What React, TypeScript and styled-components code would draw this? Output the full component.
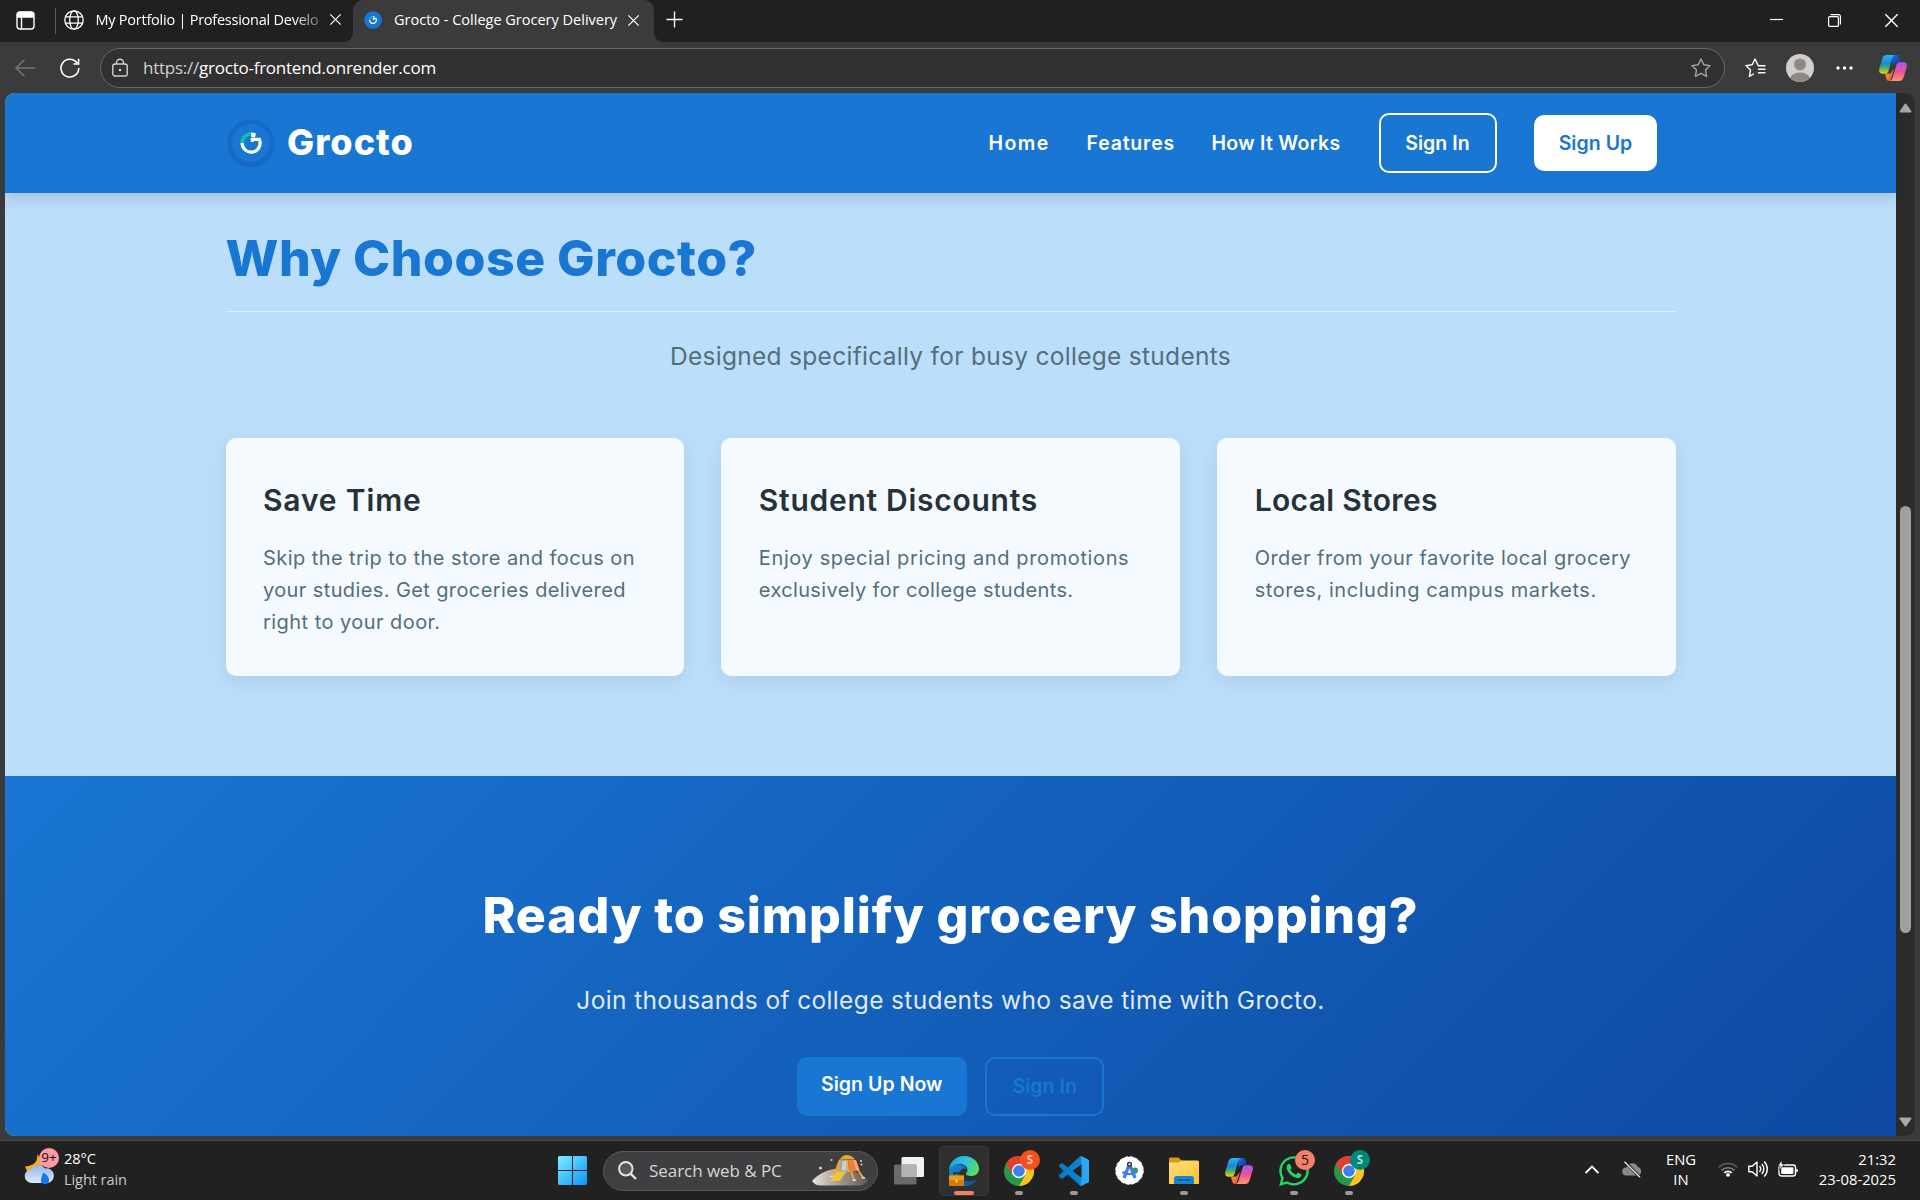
import React from "react";
import styled, { createGlobalStyle, css } from "styled-components";
import { FaWhatsapp } from "react-icons/fa";

const GlobalStyle = createGlobalStyle`
  * { box-sizing: border-box; }
  html, body { margin: 0; padding: 0; background: #3b3b3b; overflow: hidden; }
  h1, h2, h3, p { margin: 0; font-weight: inherit; }
  svg { display: block; flex: none; overflow: visible; }
`;

const ui = `"Open Sans", "Noto Sans", sans-serif`;
const brand = `Inter, "Open Sans", sans-serif`;

const Desktop = styled.div`
  width: 1920px;
  height: 1200px;
  display: flex;
  flex-direction: column;
  background: #3b3b3b;
  font-family: ${ui};
  color: #fff;
  white-space: nowrap;
`;

/* ---------- browser chrome ---------- */

const TabStrip = styled.div`
  height: 42px;
  flex: none;
  display: flex;
  align-items: center;
  background: #202020;
  padding: 0 0 1px 15.5px;
`;

const Divider = styled.div`
  width: 1px;
  height: 26px;
  margin-left: 20.5px;
  background: #5c5c5c;
`;

const Tab = styled.div<{ $active?: boolean }>`
  position: relative;
  height: 42px;
  display: flex;
  align-items: center;
  padding-bottom: 2px;
  font-size: 14.5px;
  ${(p) =>
    p.$active
      ? css`
          align-self: flex-end;
          margin-bottom: -1px;
          width: 301px;
          padding-left: 11px;
          border-radius: 10px 10px 0 0;
          background: #3b3b3b;
          &::before,
          &::after {
            content: "";
            position: absolute;
            bottom: 0;
            width: 9px;
            height: 9px;
          }
          &::before {
            left: -9px;
            background: radial-gradient(circle at 0 0, transparent 8.5px, #3b3b3b 9px);
          }
          &::after {
            right: -9px;
            background: radial-gradient(circle at 100% 0, transparent 8.5px, #3b3b3b 9px);
          }
        `
      : css`
          width: 297px;
          padding-left: 7.5px;
        `}
`;

const TabTitle = styled.span<{ $fade?: boolean }>`
  width: ${(p) => (p.$fade ? 224 : 225)}px;
  margin: 0 ${(p) => (p.$fade ? 10 : 9)}px 1px 12px;
  overflow: hidden;
  letter-spacing: ${(p) => (p.$fade ? -0.24 : 0)}px;
  ${(p) => p.$fade && "mask-image: linear-gradient(90deg, #000 88%, rgba(0,0,0,.3));"}
`;

const NewTab = styled.div`
  margin-left: 12px;
  padding-bottom: 2px;
`;

const WindowControls = styled.div`
  margin-left: auto;
  display: flex;
  align-items: center;
  gap: 44.5px;
  padding-right: 22px;
`;

const Toolbar = styled.div`
  height: 51px;
  flex: none;
  display: flex;
  align-items: center;
  padding: 1px 13px 0 15px;
`;

const ReloadSlot = styled.div`
  margin: 0 20px 0 25px;
`;

const AddressBar = styled.div`
  width: 1625px;
  height: 40px;
  display: flex;
  align-items: center;
  border: 1.5px solid #696969;
  border-radius: 20px;
  background: #313131;
  padding: 0 13px 0 11px;
`;

const Url = styled.div`
  flex: 1;
  margin-left: 15px;
  padding-bottom: 2px;
  font-size: 17px;
  letter-spacing: -0.24px;
`;

const Scheme = styled.span`
  color: #d2d2d2;
`;

const ToolIcons = styled.div`
  display: flex;
  align-items: center;
  margin-left: 20px;
  flex: 1;
`;

const ToolSlot = styled.div<{ $after: number }>`
  margin-right: ${(p) => p.$after}px;
`;

/* ---------- page ---------- */

const Viewport = styled.div`
  height: 1043px;
  flex: none;
  margin: 0 5px;
  display: flex;
  border-radius: 10px;
  overflow: hidden;
`;

const Page = styled.main`
  width: 1891px;
  display: flex;
  flex-direction: column;
  font-family: ${brand};
  background: #bbdefb;
`;

const ScrollTrack = styled.div`
  flex: 1;
  display: flex;
  flex-direction: column;
  align-items: center;
  background: #2b2b2b;
  padding: 10px 1px 9px 0;
`;

const ScrollThumb = styled.div`
  width: 11px;
  height: 427px;
  margin: 393px 0 auto;
  border-radius: 6px;
  background: #9f9f9f;
`;

const SiteHeader = styled.header`
  height: 100px;
  flex: none;
  z-index: 1;
  display: flex;
  align-items: center;
  padding: 0 239px 0 222px;
  background: #1976d2;
  box-shadow: 0 4px 15px rgba(0, 0, 0, 0.16);
`;

const BrandName = styled.div`
  margin-left: 12px;
  padding-bottom: 2px;
  font-size: 36px;
  font-weight: 800;
  letter-spacing: 1.05px;
`;

const Nav = styled.nav`
  margin-left: auto;
  display: flex;
  align-items: center;
  gap: 37.5px;
  font-size: 19.5px;
  font-weight: 600;
`;

const NavLink = styled.a<{ $w: number; $track: number }>`
  width: ${(p) => p.$w}px;
  letter-spacing: ${(p) => p.$track}px;
`;

const Button = styled.a<{ $kind: "ghost" | "light" | "primary" | "outline" }>`
  display: flex;
  align-items: center;
  justify-content: center;
  border-radius: 10px;
  font-size: 19.5px;
  font-weight: 600;
  letter-spacing: 0.05px;
  ${(p) =>
    ({
      ghost: "width: 118px; height: 60px; border: 2px solid #fff; color: #fff; padding-bottom: 1px;",
      light: "width: 123px; height: 56px; background: #fff; color: #1976d2; padding-bottom: 1px;",
      primary: "width: 170px; height: 59px; background: #1976d2; color: #fff; padding-bottom: 6px;",
      outline: "width: 119px; height: 59px; border: 2px solid #1976d2; color: #1976d2; padding-bottom: 2px;",
    })[p.$kind]}
`;

const Features = styled.section`
  height: 583px;
  flex: none;
  padding: 35px 220.5px 0;
`;

const SectionTitle = styled.h2`
  padding-bottom: 22.5px;
  border-bottom: 1px solid #e3f0fb;
  line-height: 60px;
  font-size: 50px;
  font-weight: 800;
  letter-spacing: 0.5px;
  color: #1976d2;
`;

const SectionLead = styled.p`
  margin: 25.5px 0 63px;
  line-height: 38px;
  font-size: 24.5px;
  letter-spacing: 0.29px;
  text-align: center;
  color: #546e7a;
`;

const CardGrid = styled.div`
  display: grid;
  grid-template-columns: repeat(3, 1fr);
  gap: 37.5px;
`;

const Card = styled.article`
  height: 238px;
  padding: 37.5px;
  border-radius: 10px;
  background: #f5faff;
  box-shadow: 0 5px 19px rgba(0, 0, 0, 0.08);
`;

const CardTitle = styled.h3<{ $track: number }>`
  line-height: 48px;
  font-size: 30px;
  font-weight: 600;
  letter-spacing: ${(p) => p.$track}px;
  color: #263238;
`;

const CardText = styled.p`
  margin-top: 18.5px;
  line-height: 32px;
  font-size: 20px;
  color: #546e7a;
`;

const CardLine = styled.span<{ $track: number }>`
  display: block;
  letter-spacing: ${(p) => p.$track}px;
`;

const CallToAction = styled.section`
  height: 440px;
  flex: none;
  display: flex;
  flex-direction: column;
  align-items: center;
  padding-top: 109px;
  background: linear-gradient(135deg, #1976d2 0%, #0d47a1 100%);
`;

const CtaTitle = styled.h2`
  line-height: 60px;
  font-size: 50px;
  font-weight: 800;
  letter-spacing: 0.83px;
`;

const CtaLead = styled.p`
  margin: 36px 0 38px;
  line-height: 38px;
  font-size: 24.5px;
  letter-spacing: 0.36px;
  color: rgba(255, 255, 255, 0.88);
`;

const CtaActions = styled.div`
  display: flex;
  gap: 18.5px;
`;

/* ---------- taskbar ---------- */

const Taskbar = styled.footer`
  height: 59px;
  margin-top: auto;
  display: grid;
  grid-template-columns: 558px auto 1fr;
  background: #212121;
  box-shadow: 0 -1px 0 #484848;
`;

const Weather = styled.div`
  position: relative;
  display: flex;
  align-items: center;
  padding: 0 0 4px 25px;
  gap: 9px;
`;

const WeatherText = styled.div`
  font-size: 14.6px;
  line-height: 20.3px;
  letter-spacing: -0.1px;
  color: #c9c9c9;
`;

const Temperature = styled.div`
  color: #fff;
`;

const Dock = styled.div`
  display: flex;
  align-items: center;
`;

const SearchBox = styled.div`
  width: 275px;
  height: 40px;
  margin: 0 3.5px 0 16px;
  display: flex;
  align-items: center;
  padding: 0 8px 0 14px;
  border: 1px solid #58585b;
  border-radius: 20px;
  background: #3f3f42;
  overflow: hidden;
`;

const SearchLabel = styled.span`
  flex: 1;
  margin-left: 12px;
  font-size: 17px;
  letter-spacing: -0.05px;
  color: #d6d6d6;
`;

const DockCell = styled.div`
  width: 55px;
  height: 59px;
  display: flex;
  justify-content: center;
  align-items: center;
`;

const DockTile = styled.div<{ $active?: boolean }>`
  position: relative;
  width: 50px;
  height: 50px;
  display: flex;
  flex-direction: column;
  align-items: center;
  padding-top: 10px;
  gap: 5px;
  border-radius: 5px;
  ${(p) => p.$active && "background: #2f2f30; box-shadow: inset 0 0 0 1px #3a3a3b;"}
`;

const IconBox = styled.div`
  height: 30px;
  display: flex;
  align-items: center;
`;

const Indicator = styled.div<{ $active?: boolean }>`
  width: ${(p) => (p.$active ? 20 : 8)}px;
  height: 4px;
  flex: none;
  border-radius: 2px;
  background: ${(p) => (p.$active ? "#f4806a" : "#9a9a9a")};
`;

const Badge = styled.div<{ $bg: string; $fg: string; $x: number; $y: number; $size: number; $bold?: boolean }>`
  position: absolute;
  left: ${(p) => p.$x}px;
  top: ${(p) => p.$y}px;
  width: 20px;
  height: 20px;
  border-radius: 50%;
  text-align: center;
  line-height: 19.5px;
  font-size: ${(p) => p.$size}px;
  font-weight: ${(p) => (p.$bold ? 700 : 400)};
  background: ${(p) => p.$bg};
  color: ${(p) => p.$fg};
`;

const Tray = styled.div`
  display: flex;
  align-items: center;
  justify-content: flex-end;
  padding: 0 24px 3px 0;
`;

const TrayItem = styled.div<{ $after: number }>`
  margin-right: ${(p) => p.$after}px;
`;

const TrayText = styled.div<{ $w: number; $align: string; $after?: number }>`
  width: ${(p) => p.$w}px;
  margin-right: ${(p) => p.$after ?? 0}px;
  text-align: ${(p) => p.$align};
  font-size: 14.8px;
  line-height: 20.3px;
`;

/* ---------- drawings ---------- */

const TabActionsIcon = () => (
  <svg width="19" height="19" viewBox="0 0 19 19" fill="none" stroke="#fff" strokeWidth="1.4">
    <rect x="1" y="1" width="17" height="17" rx="3" />
    <path d="M1.500 4a2.500 2.500 0 0 1 2.500-2.500h11a2.500 2.500 0 0 1 2.500 2.500v2h-16z" fill="#fff" />
    <path d="M5.500 6v12" />
  </svg>
);

const GlobeIcon = () => (
  <svg width="20" height="20" viewBox="0 0 20 20" fill="none" stroke="#fff" strokeWidth="1.3">
    <circle cx="10" cy="10" r="9.2" />
    <ellipse cx="10" cy="10" rx="4.300" ry="9.200" />
    <path d="M1.500 6.800h17M1.500 13.200h17" />
  </svg>
);

const CloseIcon = ({ size = 11 }: { size?: number }) => (
  <svg width={size} height={size} viewBox="0 0 11 11" stroke="#fff" strokeWidth="1.200">
    <path d="M.3.3l10.400 10.400M10.700.3L.3 10.700" />
  </svg>
);

const GroctoMark = ({ size, ring = "#1769c6" }: { size: number; ring?: string }) => (
  <svg width={size} height={size} viewBox="0 0 48 48" fill="none">
    <circle cx="24" cy="24.700" r="23.700" fill="#0d47a1" opacity=".3" />
    <circle cx="24" cy="24" r="23.500" fill={ring} />
    <circle cx="24" cy="24" r="19" fill="#1976d2" />
    <path d="M15.100 24.500A9 9.300 0 0 1 24 15" stroke="#10bfa8" strokeWidth="3.600" />
    <path d="M15.100 24A9 9.300 0 1 0 32.400 20.300H25.300V23" stroke="#fff" strokeWidth="3.200" />
    <path d="M24 13.200l5 1.300-1.200 4.200-3.800-1.200z" fill="#fff" />
  </svg>
);

const PlusIcon = () => (
  <svg width="17" height="17" viewBox="0 0 18 18" stroke="#fff" strokeWidth="1.400">
    <path d="M9 .5v17M.5 9h17" />
  </svg>
);

const MinimizeIcon = () => (
  <svg width="13" height="13" viewBox="0 0 13 13" stroke="#fff" strokeWidth="1.200">
    <path d="M0 5.500h13" />
  </svg>
);

const RestoreIcon = () => (
  <svg width="13" height="13" viewBox="0 0 13 13" fill="none" stroke="#fff" strokeWidth="1.200">
    <rect x=".6" y="2.600" width="9.800" height="9.800" rx="1" />
    <path d="M2.600.6h7.800a2 2 0 0 1 2 2v7.800" />
  </svg>
);

const BackIcon = () => (
  <svg width="20" height="18" viewBox="0 0 20 18" fill="none" stroke="#757575" strokeWidth="1.500">
    <path d="M9.500.8L1 9l8.500 8.200M1 9h19" />
  </svg>
);

const ReloadIcon = () => (
  <svg width="20" height="20" viewBox="0 0 20 20" fill="none" stroke="#fff" strokeWidth="1.600">
    <path d="M18.800 10A8.900 8.900 0 1 1 16.800 4.500L18.500 6" />
    <path d="M18.600.8V6h-5.200" />
  </svg>
);

const LockIcon = () => (
  <svg width="16" height="18" viewBox="0 0 16 18" fill="none" stroke="#d0d0d0" strokeWidth="1.400">
    <rect x=".8" y="5" width="14.400" height="12" rx="2.200" />
    <path d="M4.500 5V3.800a3.500 3.500 0 0 1 7 0V5" />
    <circle cx="8" cy="11" r="1.300" fill="#d0d0d0" stroke="none" />
  </svg>
);

const StarIcon = () => (
  <svg width="20" height="20" viewBox="0 0 20 20" fill="none" stroke="#a5a5a5" strokeWidth="1.400" strokeLinejoin="round">
    <path d="M10 1l2.800 5.700 6.300.9-4.600 4.400 1.100 6.300L10 15.300l-5.600 3 1.100-6.300L.9 7.600l6.300-.9z" />
  </svg>
);

const FavoritesIcon = () => (
  <svg width="21" height="20" viewBox="0 0 21 20" fill="none" stroke="#fff" strokeWidth="1.400" strokeLinejoin="round" strokeLinecap="round">
    <path d="M19.500 7.800h-6.200L10 1 7.200 6.700l-6.300.9 4.600 4.400-1.100 6.300 4-2.300M13.500 11.300h6.500M13.500 14.800h6.500M13.500 7.800h6.500" />
  </svg>
);

const AvatarIcon = () => (
  <svg width="28" height="28" viewBox="0 0 28 28">
    <defs>
      <clipPath id="avatar">
        <circle cx="14" cy="14" r="14" />
      </clipPath>
    </defs>
    <g clipPath="url(#avatar)">
      <rect width="28" height="28" fill="#d2cfcb" />
      <circle cx="14" cy="10.500" r="6" fill="#8d8986" />
      <ellipse cx="14" cy="25.500" rx="10" ry="7" fill="#8d8986" />
    </g>
  </svg>
);

const MoreIcon = () => (
  <svg width="17" height="4" viewBox="0 0 17 4" fill="#fff">
    <circle cx="2" cy="2" r="1.700" />
    <circle cx="8.500" cy="2" r="1.700" />
    <circle cx="15" cy="2" r="1.700" />
  </svg>
);

const CopilotIcon = ({ id }: { id: string }) => (
  <svg width="28" height="26" viewBox="0 0 28 26">
    <defs>
      <linearGradient id={`${id}a`} x1="0" y1="0" x2="0" y2="1">
        <stop offset="0" stopColor="#22b8f5" />
        <stop offset=".45" stopColor="#1b86d8" />
        <stop offset=".7" stopColor="#4bb35a" />
        <stop offset="1" stopColor="#f6d014" />
      </linearGradient>
      <linearGradient id={`${id}b`} x1="0" y1="0" x2="0" y2="1">
        <stop offset="0" stopColor="#a45af0" />
        <stop offset=".5" stopColor="#ee4f9c" />
        <stop offset="1" stopColor="#fb9a63" />
      </linearGradient>
      <linearGradient id={`${id}c`} x1="0" y1="0" x2="1" y2="1">
        <stop offset="0" stopColor="#1a70e0" />
        <stop offset="1" stopColor="#0a35a5" />
      </linearGradient>
      <linearGradient id={`${id}d`} x1="0" y1="0" x2="1" y2="1">
        <stop offset="0" stopColor="#f9a02c" />
        <stop offset="1" stopColor="#ee4a48" />
      </linearGradient>
    </defs>
    <path d="M13 0h4.500c1.800 0 2.600 1.200 3 2.600l1.400 4.600h-4.600c-2 0-2.900 1.200-3.500 3z" fill={`url(#${id}c)`} />
    <path d="M6 18.500h5.500l3.500-4.500-3 10c-.4 1.300-1.200 2-2.400 2C7.500 26 6.600 21.500 6 18.500z" fill={`url(#${id}d)`} />
    <path d="M8 0h8.200c-1.700.2-2.400 1.500-2.900 3.100l-3.700 12.700c-.5 1.700-1.500 2.900-3.400 2.900H3.500C.6 18.700-.4 16.400.3 13.800L3.300 3.500C4 1.200 5.500 0 8 0z" fill={`url(#${id}a)`} />
    <path d="M20 26h-9.700c2-.2 2.700-1.600 3.200-3.200l4-12.900c.5-1.700 1.500-2.700 3.300-2.700h4c2.600 0 3.700 2 3 4.600l-3.200 10.500C24 24.600 22.500 26 20 26z" fill={`url(#${id}b)`} />
  </svg>
);

const TriangleIcon = ({ down }: { down?: boolean }) => (
  <svg width="13" height="10" viewBox="0 0 13 10" fill="#a8a8a8">
    <path d={down ? "M1.200.5h10.600q1.200.2.600 1.300L7.400 9q-.9 1-1.800 0L.6 1.800Q0 .7 1.200.5z" : "M1.200 9.500h10.600q1.200-.2.600-1.300L7.400 1q-.9-1-1.800 0L.6 8.200Q0 9.300 1.200 9.500z"} />
  </svg>
);

const WeatherIcon = () => (
  <svg width="30" height="30" viewBox="0 0 30 30">
    <defs>
      <linearGradient id="cloud" x1="0" y1="0" x2="0" y2="1">
        <stop offset="0" stopColor="#8fb6ee" />
        <stop offset="1" stopColor="#dfe9fb" />
      </linearGradient>
    </defs>
    <path d="M12 0c1.500 7-3 12-12 12.500C1 17 5 20 10 19c6-1.500 9-8 7-13z" fill="#f7a91f" />
    <path d="M7 29a7 7 0 0 1-.5-14A8 8 0 0 1 20 14.500 7.300 7.300 0 0 1 23 29z" fill="url(#cloud)" />
    <path d="M18 18.500c4 2 6 4.500 6 7.500a4 4 0 0 1-8 .5c0-2.500 1.500-5 2-8z" fill="#1677ee" />
  </svg>
);

const WindowsIcon = () => (
  <svg width="29" height="29" viewBox="0 0 29 29">
    <defs>
      <linearGradient id="win" gradientUnits="userSpaceOnUse" x1="0" y1="0" x2="29" y2="29">
        <stop offset="0" stopColor="#7cf0ff" />
        <stop offset="1" stopColor="#0a93fa" />
      </linearGradient>
    </defs>
    <path d="M1 0h13v14H0V1zM15 0h13l1 1v13H15zM0 15h14v14H1l-1-1zM15 15h14v13l-1 1H15z" fill="url(#win)" />
  </svg>
);

const SearchIcon = () => (
  <svg width="19" height="19" viewBox="0 0 19 19" fill="none" stroke="#e4e4e4" strokeWidth="2">
    <circle cx="7.800" cy="7.800" r="6.700" fill="#58585b" />
    <path d="M12.600 12.600l5.400 5.400" strokeWidth="2.400" />
  </svg>
);

const LanderArt = () => (
  <svg width="57" height="31" viewBox="0 0 57 31">
    <defs>
      <linearGradient id="moon" x1="0" y1="0" x2="1" y2="0">
        <stop offset="0" stopColor="#e9e3da" />
        <stop offset=".45" stopColor="#a8a098" />
        <stop offset="1" stopColor="#5f5751" />
      </linearGradient>
    </defs>
    <path d="M0 26C7 18 18 13 29 13.500c11 .5 21 5 27 12.500-3 3-6 4.500-8 4.500H9C5 30.500 2 29 0 26z" fill="url(#moon)" />
    <path d="M22.500 16.500L27 4.500h4l-2 12z" fill="#efa626" />
    <path d="M28.500 5h7.500v11.500h-9z" fill="#98a5b5" />
    <path d="M30.500 6h4v9.500h-5z" fill="#c4ced8" />
    <path d="M36 5h7l4 10.500-10 1.500z" fill="#ef7f3e" />
    <path d="M41 5h3l3.500 10-3 .5z" fill="#f6a868" />
    <path d="M28 4.500c1-2.500 4-4.500 7-4.500s6 1.500 8 4.500z" fill="#e2aa2a" />
    <path d="M24.500 16.500h10L27.500 26H18z" fill="#f2c33a" />
    <path d="M23 15l-3.500 6M46 15l5 7.500M39 16.500l3 8.500M35 6l1.500 11" stroke="#f0b32e" strokeWidth="1.700" />
    <path d="M49.500 22.800h3.500M40.500 25.300h3.500M18 21.500h3" stroke="#e3ded6" strokeWidth="1.400" />
    <g fill="#f3d3a0">
      <circle cx="8.500" cy="13" r="1.500" />
      <circle cx="19.500" cy="5" r="1" />
      <circle cx="49" cy="6" r="1" />
      <circle cx="49.500" cy="9.500" r="1" />
    </g>
  </svg>
);

const TaskViewIcon = () => (
  <svg width="30" height="28" viewBox="0 0 30 28">
    <rect x="7.500" y="0" width="22.500" height="20" rx="1.500" fill="#f1f1f1" />
    <rect x="0" y="7.500" width="22.500" height="20" rx="1.500" fill="#777" opacity=".85" />
    <path d="M7.500 7.500h15V20h-15z" fill="#b3b3b3" />
  </svg>
);

const EdgeIcon = () => (
  <svg width="30" height="30" viewBox="0 0 30 30">
    <defs>
      <linearGradient id="edgeTop" x1="0" y1=".4" x2="1" y2=".7">
        <stop offset="0" stopColor="#1fa3e3" />
        <stop offset=".5" stopColor="#2ec4d8" />
        <stop offset="1" stopColor="#5fe04e" />
      </linearGradient>
      <linearGradient id="edgeLow" x1="0" y1="0" x2="1" y2="1">
        <stop offset="0" stopColor="#1a8ad8" />
        <stop offset="1" stopColor="#0d4f9c" />
      </linearGradient>
    </defs>
    <path d="M0 15C0 6 7 0 15 0c8.500 0 15 6 15 12.500 0 5-3.500 7.500-8 7.500-3 0-5-1-5-2.300 0-1 1.500-1.700 1.500-3.700 0-3.500-3.500-6-8-6-5 0-9 3-10.500 7z" fill="url(#edgeTop)" />
    <path d="M0 15c0-4 5-7 9.500-6.500 4.500 0 7.500 2.500 8 5-3-2.500-7 .5-7 5 0 4 5 7 10 7 3 0 5.500-1 7.500-2.800C25.500 28 21 30 15 30 7 30 0 24 0 15z" fill="url(#edgeLow)" />
    <rect x="0" y="19.500" width="15" height="10.500" fill="#d27a0c" />
    <path d="M0 19.500h15V24H0z" fill="#f09a1a" />
    <path d="M5 19v-2h5v2" fill="none" stroke="#3d2c14" strokeWidth="1.300" />
    <rect x="6.500" y="23.500" width="2" height="3" fill="#ffe35a" />
  </svg>
);

const ChromeIcon = () => (
  <svg width="30" height="30" viewBox="0 0 30 30">
    <circle cx="15" cy="15" r="15" fill="#279847" />
    <path d="M28 7.500A15 15 0 0 1 15 30l6.500-11.250L15 7.500z" fill="#fdc41c" />
    <path d="M2 7.500a15 15 0 0 1 26 0H15L8.500 18.750z" fill="#e33e30" />
    <circle cx="15" cy="15" r="7.200" fill="#fff" />
    <circle cx="15" cy="15" r="5.800" fill="#3f80ee" />
  </svg>
);

const VsCodeIcon = () => (
  <svg width="30" height="30" viewBox="0 0 24 24">
    <defs>
      <linearGradient id="code" gradientUnits="userSpaceOnUse" x1="0" y1="0" x2="24" y2="0">
        <stop offset="0" stopColor="#0a7cc8" />
        <stop offset=".74" stopColor="#0b84d3" />
        <stop offset=".75" stopColor="#25a5ef" />
        <stop offset="1" stopColor="#2bacf4" />
      </linearGradient>
    </defs>
    <path
      fill="url(#code)"
      d="M23.150 2.587L18.210.21a1.494 1.494 0 0 0-1.705.29l-9.460 8.630-4.120-3.128a.999.999 0 0 0-1.276.057L.327 7.261A1 1 0 0 0 .326 8.740L3.899 12 .326 15.260a1 1 0 0 0 .001 1.479L1.650 17.940a.999.999 0 0 0 1.276.057l4.120-3.128 9.460 8.630a1.492 1.492 0 0 0 1.704.29l4.942-2.377A1.500 1.500 0 0 0 24 20.060V3.939a1.500 1.500 0 0 0-.85-1.352zm-5.146 14.861L10.826 12l7.178-5.448v10.896z"
    />
  </svg>
);

const AndroidStudioIcon = () => (
  <svg width="29" height="29" viewBox="0 0 29 29">
    <circle cx="14.500" cy="14.500" r="13.800" fill="#fff" stroke="#fff" strokeWidth="1" strokeDasharray="3.500 1.920" />
    <circle cx="20" cy="14.500" r="3" fill="#2f9e58" />
    <path d="M14.500 8L9 22M14.500 8L20 22" stroke="#3f7fe8" strokeWidth="3.400" />
    <path d="M7.500 16c4 2.800 10 2.800 14 0" fill="none" stroke="#3f7fe8" strokeWidth="2.400" />
    <circle cx="14.500" cy="8.300" r="1.900" fill="#cfd4da" stroke="#2c2f33" strokeWidth="1.300" />
  </svg>
);

const FolderIcon = () => (
  <svg width="30" height="27" viewBox="0 0 30 27">
    <defs>
      <linearGradient id="folder" x1="0" y1="0" x2="1" y2="1">
        <stop offset="0" stopColor="#ffe07a" />
        <stop offset="1" stopColor="#fcc02d" />
      </linearGradient>
    </defs>
    <path d="M0 2a1.500 1.500 0 0 1 1.500-1.500h8L13 4h-2L9 7H0z" fill="#dc9a10" />
    <path d="M0 5.500h9l3.500-2H28.500A1.500 1.500 0 0 1 30 5v22H0z" fill="url(#folder)" />
    <path d="M5 27v-5.500A2.500 2.500 0 0 1 7.500 19h15a2.500 2.500 0 0 1 2.500 2.500V27z" fill="#1583d6" />
    <path d="M8.500 23h13" stroke="#0b4f90" strokeWidth="1.400" />
  </svg>
);

const ChevronUpIcon = () => (
  <svg width="14" height="9" viewBox="0 0 14 9" fill="none" stroke="#fff" strokeWidth="1.800">
    <path d="M.6 8L7 1.600 13.400 8" />
  </svg>
);

const CloudOffIcon = () => (
  <svg width="20" height="17" viewBox="0 0 20 17">
    <path d="M4 14.500A4 4 0 0 1 4.500 6.500 6 6 0 0 1 15.800 6 4.400 4.400 0 0 1 16 14.500z" fill="#8a8a8a" />
    <path d="M3 .5l15 16" stroke="#212121" strokeWidth="3" />
    <path d="M2.500.8l15.500 15.500" stroke="#e0e0e0" strokeWidth="1.400" />
  </svg>
);

const WifiIcon = () => (
  <svg width="20" height="16" viewBox="0 0 20 16" fill="none" strokeWidth="1.500">
    <path d="M.6 6.400a13 13 0 0 1 18.800 0" stroke="#5e5e5e" />
    <path d="M3.600 9.400a9 9 0 0 1 12.800 0" stroke="#858585" />
    <path d="M6.200 12a5.300 5.300 0 0 1 7.600 0" stroke="#fff" strokeWidth="1.700" />
    <circle cx="10" cy="13.800" r="1.900" fill="#fff" />
  </svg>
);

const SpeakerIcon = () => (
  <svg width="20" height="18" viewBox="0 0 20 18" fill="none" stroke="#fff" strokeWidth="1.400">
    <path d="M.8 6.200h3.400L9 2v14l-4.800-4.200H.8z" strokeLinejoin="round" />
    <path d="M11.500 6.300a4 4 0 0 1 0 5.400M13.800 4a7.300 7.300 0 0 1 0 10M16.200 1.500a10.700 10.700 0 0 1 0 15" />
  </svg>
);

const BatteryIcon = () => (
  <svg width="20" height="18" viewBox="0 0 20 18">
    <rect x="1" y="5" width="16.500" height="11" rx="2.600" fill="none" stroke="#fff" strokeWidth="1.400" />
    <rect x="3.200" y="7.200" width="12.200" height="6.700" rx="1" fill="#fff" />
    <path d="M18.300 8.500q1.700.3 1.700 2t-1.700 2z" fill="#fff" />
    <path d="M3.800 0L0 6h2.200L1.200 10.500 6.500 4H4z" fill="#fff" stroke="#212121" strokeWidth=".7" />
  </svg>
);

/* ---------- content ---------- */

const cards = [
  {
    title: "Save Time",
    track: 0.85,
    lines: [
      ["Skip the trip to the store and focus on", 0.43],
      ["your studies. Get groceries delivered", 0.39],
      ["right to your door.", 0.45],
    ],
  },
  {
    title: "Student Discounts",
    track: 0.73,
    lines: [
      ["Enjoy special pricing and promotions", 0.62],
      ["exclusively for college students.", 0.35],
    ],
  },
  {
    title: "Local Stores",
    track: 0.33,
    lines: [
      ["Order from your favorite local grocery", 0.48],
      ["stores, including campus markets.", 0.57],
    ],
  },
] as { title: string; track: number; lines: [string, number][] }[];

type DockEntry = {
  icon: React.ReactNode;
  running?: boolean;
  active?: boolean;
  badge?: { text: string; bg: string; fg: string; size: number; bold?: boolean };
};

const dock: DockEntry[] = [
  { icon: <TaskViewIcon /> },
  { icon: <EdgeIcon />, running: true, active: true },
  { icon: <ChromeIcon />, running: true, badge: { text: "S", bg: "#f4511e", fg: "#fbc3ae", size: 11.5, bold: true } },
  { icon: <VsCodeIcon />, running: true },
  { icon: <AndroidStudioIcon /> },
  { icon: <FolderIcon />, running: true },
  { icon: <CopilotIcon id="dock" /> },
  { icon: <FaWhatsapp size={34} color="#25d366" />, running: true, badge: { text: "5", bg: "#f4806a", fg: "#111", size: 14 } },
  { icon: <ChromeIcon />, running: true, badge: { text: "S", bg: "#00897b", fg: "#b2dfdb", size: 11.5, bold: true } },
];

export default function App() {
  return (
    <Desktop>
      <GlobalStyle />
      <TabStrip>
        <TabActionsIcon />
        <Divider />
        <Tab>
          <GlobeIcon />
          <TabTitle $fade>My Portfolio | Professional Develo</TabTitle>
          <CloseIcon />
        </Tab>
        <Tab $active>
          <GroctoMark size={18} ring="#1976d2" />
          <TabTitle>Grocto - College Grocery Delivery</TabTitle>
          <CloseIcon />
        </Tab>
        <NewTab>
          <PlusIcon />
        </NewTab>
        <WindowControls>
          <MinimizeIcon />
          <RestoreIcon />
          <CloseIcon size={13} />
        </WindowControls>
      </TabStrip>
      <Toolbar>
        <BackIcon />
        <ReloadSlot>
          <ReloadIcon />
        </ReloadSlot>
        <AddressBar>
          <LockIcon />
          <Url>
            <Scheme>https://</Scheme>grocto-frontend.onrender.com
          </Url>
          <StarIcon />
        </AddressBar>
        <ToolIcons>
          <ToolSlot $after={20}>
            <FavoritesIcon />
          </ToolSlot>
          <ToolSlot $after={22}>
            <AvatarIcon />
          </ToolSlot>
          <ToolSlot $after={26}>
            <MoreIcon />
          </ToolSlot>
          <CopilotIcon id="bar" />
        </ToolIcons>
      </Toolbar>

      <Viewport>
        <Page>
          <SiteHeader>
            <GroctoMark size={48} />
            <BrandName>Grocto</BrandName>
            <Nav>
              <NavLink $w={60.5} $track={1.4}>Home</NavLink>
              <NavLink $w={87.5} $track={0.8}>Features</NavLink>
              <NavLink $w={129.5} $track={0.28}>How It Works</NavLink>
              <Button $kind="ghost">Sign In</Button>
              <Button $kind="light">Sign Up</Button>
            </Nav>
          </SiteHeader>
          <Features>
            <SectionTitle>Why Choose Grocto?</SectionTitle>
            <SectionLead>Designed specifically for busy college students</SectionLead>
            <CardGrid>
              {cards.map((card) => (
                <Card key={card.title}>
                  <CardTitle $track={card.track}>{card.title}</CardTitle>
                  <CardText>
                    {card.lines.map(([text, track]) => (
                      <CardLine key={text} $track={track}>
                        {text}
                      </CardLine>
                    ))}
                  </CardText>
                </Card>
              ))}
            </CardGrid>
          </Features>
          <CallToAction>
            <CtaTitle>Ready to simplify grocery shopping?</CtaTitle>
            <CtaLead>Join thousands of college students who save time with Grocto.</CtaLead>
            <CtaActions>
              <Button $kind="primary">Sign Up Now</Button>
              <Button $kind="outline">Sign In</Button>
            </CtaActions>
          </CallToAction>
        </Page>
        <ScrollTrack>
          <TriangleIcon />
          <ScrollThumb />
          <TriangleIcon down />
        </ScrollTrack>
      </Viewport>

      <Taskbar>
        <Weather>
          <WeatherIcon />
          <Badge $bg="#ff99a4" $fg="#111" $x={39} $y={6.5} $size={13.5}>
            9+
          </Badge>
          <WeatherText>
            <Temperature>28°C</Temperature>
            Light rain
          </WeatherText>
        </Weather>
        <Dock>
          <WindowsIcon />
          <SearchBox>
            <SearchIcon />
            <SearchLabel>Search web &amp; PC</SearchLabel>
            <LanderArt />
          </SearchBox>
          {dock.map((entry, i) => (
            <DockCell key={i}>
              <DockTile $active={entry.active}>
                <IconBox>{entry.icon}</IconBox>
                {entry.running && <Indicator $active={entry.active} />}
                {entry.badge && (
                  <Badge
                    $bg={entry.badge.bg}
                    $fg={entry.badge.fg}
                    $x={26}
                    $y={4}
                    $size={entry.badge.size}
                    $bold={entry.badge.bold}
                  >
                    {entry.badge.text}
                  </Badge>
                )}
              </DockTile>
            </DockCell>
          ))}
        </Dock>
        <Tray>
          <TrayItem $after={23}>
            <ChevronUpIcon />
          </TrayItem>
          <TrayItem $after={23}>
            <CloudOffIcon />
          </TrayItem>
          <TrayText $w={32} $align="center" $after={21}>
            ENG
            <br />
            IN
          </TrayText>
          <TrayItem $after={10}>
            <WifiIcon />
          </TrayItem>
          <TrayItem $after={10}>
            <SpeakerIcon />
          </TrayItem>
          <TrayItem $after={20}>
            <BatteryIcon />
          </TrayItem>
          <TrayText $w={78} $align="right">
            21:32
            <br />
            23-08-2025
          </TrayText>
        </Tray>
      </Taskbar>
    </Desktop>
  );
}
